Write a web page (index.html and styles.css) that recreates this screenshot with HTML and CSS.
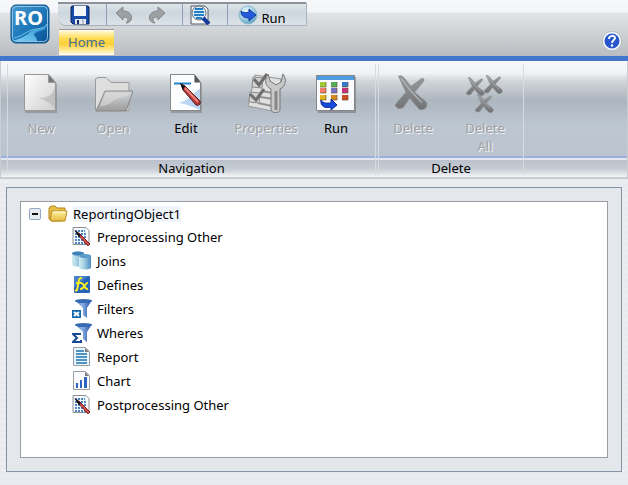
FILE: index.html
```html
<!DOCTYPE html>
<html lang="en">
<head>
<meta charset="utf-8">
<title>Reporting Object</title>
<link rel="stylesheet" href="styles.css">
</head>
<body>
<svg class="defs" aria-hidden="true">
  <defs>
    <linearGradient id="gPage" x1="0" y1="0" x2="1" y2="1"><stop offset="0" stop-color="#fff"/><stop offset="1" stop-color="#cfcfcf"/></linearGradient>
    <linearGradient id="gGrey" x1="0" y1="0" x2="0" y2="1"><stop offset="0" stop-color="#d4d6d8"/><stop offset="1" stop-color="#9c9c9c"/></linearGradient>
    <linearGradient id="gLogo" x1="0" y1="0" x2="1" y2="1"><stop offset="0" stop-color="#4a9bd0"/><stop offset=".55" stop-color="#1a76b8"/><stop offset="1" stop-color="#0a4f92"/></linearGradient>
    <linearGradient id="gRiver" x1="1" y1="0" x2="0" y2="1"><stop offset="0" stop-color="#2a8bc9"/><stop offset="1" stop-color="#7fd2f6"/></linearGradient>
    <linearGradient id="gX" x1="0" y1="0" x2="0" y2="1"><stop offset="0" stop-color="#989a9c"/><stop offset="1" stop-color="#707275"/></linearGradient>
    <linearGradient id="gFunnel" x1="0" y1="0" x2="1" y2="0"><stop offset="0" stop-color="#285ba8"/><stop offset=".4" stop-color="#8fb5e6"/><stop offset="1" stop-color="#1c479a"/></linearGradient>
    <linearGradient id="gDb" x1="0" y1="0" x2="1" y2="0"><stop offset="0" stop-color="#d4eef0"/><stop offset=".4" stop-color="#a8d3e6"/><stop offset="1" stop-color="#4c8cc0"/></linearGradient>
    <linearGradient id="gFold" x1="0" y1="0" x2="0" y2="1"><stop offset="0" stop-color="#fff3a6"/><stop offset="1" stop-color="#e5b83c"/></linearGradient>
    <radialGradient id="gBall" cx=".4" cy=".3" r=".7"><stop offset="0" stop-color="#eaf8fc"/><stop offset=".6" stop-color="#a3d3e5"/><stop offset="1" stop-color="#5d9fc0"/></radialGradient>
    <g id="cross"><path d="M3 1Q5 0 7 2L13 10 22 3Q25 3 23 6L16 15 26 24Q27 31 20 30L12 20 7 28Q2 31 0 26L9 15Z" fill="url(#gX)" stroke="#8d8f92" stroke-width=".8"/><path d="M5 3L13 14 22 24" fill="none" stroke="#b4b6b8" stroke-width="1"/></g>
    <g id="processing"><path d="M1 .5h13l3 3v14H1z" fill="#f7faff" stroke="#8e9092"/><path d="M3 4h10M3 7h12M3 10h12M3 13h12M3 16h11" stroke="#4a86c4" stroke-width="2" stroke-dasharray="2 1"/><path d="M4 4l4 3 10 10-2 2L6 8z" fill="#d24842" stroke="#6b1a20" stroke-width=".8"/><path d="M2 3l7 5-2 2z" fill="#111"/></g>
    <g id="funnel"><path d="M3 1h17l-5 8v10l-4-3V9z" fill="url(#gFunnel)"/><ellipse cx="11.500" cy="2" rx="8.500" ry="2" fill="#376ab3"/></g>
  </defs>
</svg>

<header class="header">
  <svg class="logo" viewBox="0 0 40 40" role="img" aria-label="RO">
    <rect x="1" y="1" width="38" height="38" rx="5" fill="url(#gLogo)" stroke="#0b5288"/>
    <path d="M37 21C34 26 24 24 20 28S11 34 3 37h24c0-5-5-5-2-8 5-3 12-2 12-8z" fill="url(#gRiver)"/>
    <path d="M37 20C34 26 24 24 19 27S9 33 4 34" fill="none" stroke="#75c6ed" stroke-width="1"/>
    <rect x="2.500" y="2.500" width="35" height="35" rx="4" fill="none" stroke="#8fc2e2"/>
    <text x="18.500" y="21" text-anchor="middle" class="logo-text">RO</text>
  </svg>
  <div class="header-main">
    <div class="quickbar" role="toolbar" aria-label="Quick access">
      <button class="quick quick-save" aria-label="Save"><svg width="20" height="20" viewBox="0 0 20 20"><path d="M2 1h16l1 1v17H3l-2-2V2z" fill="#174ba9" stroke="#0b2358"/><path d="M4 1h12v10H4z" fill="#f4f7fa"/><path d="M5 14h11v5H5z" fill="#e5e9ef"/><path d="M7 15h2v4H7z" fill="#102c70"/><path d="M12 15h1v4" stroke="#8e9cb8" fill="none"/></svg></button>
      <button class="quick quick-undo" aria-label="Undo"><svg width="18" height="18" viewBox="0 0 18 18"><path d="M1 7l7-6v4c7 0 10 5 8 9-1 2-3 3-5 3 3-3 3-6-3-6v3z" fill="#9ea1a4" stroke="#85898d"/></svg></button>
      <button class="quick quick-redo" aria-label="Redo"><svg width="18" height="18" viewBox="0 0 18 18"><path d="M17 7l-7-6v4C3 5 0 10 2 14c1 2 3 3 5 3-3-3-3-6 3-6v3z" fill="#9ea1a4" stroke="#85898d"/></svg></button>
      <button class="quick quick-view" aria-label="Preview"><svg width="22" height="20" viewBox="0 0 22 20"><path d="M2 1h14l3 3v15H2z" fill="#f6f8f9" stroke="#55595f"/><circle cx="10" cy="8" r="7" fill="#d7f0fb" stroke="#696f75"/><path d="M6 4h8M5 7h10M5 10h10M7 13h6" stroke="#247cc2" stroke-width="2"/><path d="M14 13l6 6" stroke="#153b9c" stroke-width="4"/></svg></button>
      <button class="quick quick-run"><svg width="20" height="20" viewBox="0 0 20 20"><circle cx="10" cy="10" r="9" fill="url(#gBall)" stroke="#8dbbcc"/><path d="M3 6c2 2 5 2 8 1V4l7 6-7 6v-3c-4 0-8-1-8-7z" fill="#245ce0" stroke="#143899"/></svg><span>Run</span></button>
    </div>
    <nav class="tabs"><a class="tab" href="#home">Home</a></nav>
  </div>
  <button class="help" aria-label="Help"><svg width="20" height="20" viewBox="0 0 20 20"><circle cx="10" cy="10" r="8.500" fill="#2855cc" stroke="#f6f8fb" stroke-width="2"/><circle cx="10" cy="10" r="9.500" fill="none" stroke="#a9b1bc" stroke-width=".7"/><path d="M7 8c0-4 6-4 6-1 0 2-3 2-3 5" fill="none" stroke="#fff" stroke-width="2"/><circle cx="10" cy="14.500" r="1.200" fill="#fff"/></svg></button>
</header>

<section class="ribbon" id="home">
  <div class="group">
    <div class="tools tools-nav">
      <button class="tool" disabled><svg width="40" height="40" viewBox="0 0 40 40"><path d="M4 2h24l8 9v29H4z" fill="#777" opacity=".5"/><path d="M3.500 1.500h24l7 8v28h-31z" fill="url(#gPage)" stroke="#999"/><path d="M34 13c-1 9-8 12-17 12 8 2 13 6 17 10z" fill="#b2b2b2" opacity=".6"/><path d="M27.500 1.500v8h7z" fill="#777" stroke="#999"/></svg><span>New</span></button>
      <button class="tool" disabled><svg width="40" height="40" viewBox="0 0 40 40"><path d="M2.500 37.500V6L5 4.500h8l5 5h18v28z" fill="#dedede" stroke="#999"/><path d="M3 38l9-20h28l-7 20z" fill="url(#gGrey)" stroke="#888"/><path d="M13 20h24c-3 5-12 4-17 8-3 3-9 5-13 5z" fill="#dedede" opacity=".6"/></svg><span>Open</span></button>
      <button class="tool"><svg width="40" height="40" viewBox="0 0 40 40"><path d="M5 3h25l6 8v29H5z" fill="#777" opacity=".5"/><path d="M4.500 1.500h24l6 8v28h-30z" fill="#fcfdff" stroke="#888"/><path d="M34 16c-4 0-6 9-21 14 7 1 14 4 21 7z" fill="#bdd5f5"/><path d="M28.500 1.500v8h6z" fill="#555"/><path d="M8 10.500h17" stroke="#2184c9" stroke-width="2"/><path d="M15 11l4 2 15 15c1 3-1 5-4 4L17 17z" fill="#b33636" stroke="#542020"/><path d="M19 15l13 14" stroke="#ef8178" stroke-width="2"/><path d="M14 10l5 3-2 4z" fill="#111"/></svg><span>Edit</span></button>
      <button class="tool" disabled><svg width="40" height="40" viewBox="0 0 40 40"><path d="M9 2l26 4-4 33-29-6z" fill="#e0e0e0" stroke="#999"/><path d="M15 18l12 2M14 24l14 2M12 30l14 3" stroke="#929292" stroke-width="2"/><path d="M7 4l10 1-1 10-10-1zM4 19l10 1-1 10-10-1z" fill="#d1d1d1" stroke="#8b8b8b"/><path d="M8 6l5 6 8-11M4 21l6 6 8-11" stroke="#6e6e6e" stroke-width="3" fill="none"/><path d="M22 1c-4 6-3 12 3 15v20c0 5 9 5 9 0V16c6-3 7-9 3-15l-2 8-5 3-6-4z" fill="#c7c8c9" stroke="#777"/><path d="M30 18v19" stroke="#888" stroke-width="3"/></svg><span>Properties</span></button>
      <button class="tool"><svg width="40" height="40" viewBox="0 0 40 40"><path d="M2 4h38v36H2z" fill="#777" opacity=".6"/><path d="M.5 2.500h38v35H.5z" fill="#fbfcff" stroke="#858585"/><path d="M1 3h37v4H1z" fill="#4d9be0"/><path d="M4 9h6v5H4z" fill="#a1cc36"/><path d="M15 9h6v5h-6z" fill="#55ad58"/><path d="M26 9h6v5h-6z" fill="#3478cb"/><path d="M4 15h6v5H4z" fill="#f17b6b"/><path d="M15 15h6v5h-6z" fill="#7772c7"/><path d="M26 15h6v5h-6z" fill="#c62e79"/><path d="M4 22h6v5H4z" fill="#e0b51f"/><path d="M15 22h6v5h-6z" fill="#d7861c"/><path d="M26 22h6v5h-6z" fill="#cc4b20"/><path d="M4 14h6V9M15 14h6V9M26 14h6V9M4 20h6v-5M15 20h6v-5M26 20h6v-5M4 27h6v-5M15 27h6v-5M26 27h6v-5" fill="none" stroke="#695832" opacity=".7"/><path d="M5 27c2 4 6 3 10 3v-4l6 6-6 5v-3C9 36 4 33 5 27z" fill="#174bdc" stroke="#102c9b"/></svg><span>Run</span></button>
    </div>
    <h2 class="group-name">Navigation</h2>
  </div>
  <div class="group">
    <div class="tools tools-delete">
      <button class="tool" disabled><svg width="40" height="40" viewBox="0 0 40 40"><g transform="translate(2 2) scale(1.220 1.150)"><use href="#cross"/></g></svg><span>Delete</span></button>
      <button class="tool" disabled><svg width="40" height="40" viewBox="0 0 40 40"><g transform="translate(1 4) scale(.7 .62)"><use href="#cross"/></g><g transform="translate(19 2) scale(.7 .62)"><use href="#cross"/></g><g transform="translate(10 21) scale(.7 .62)"><use href="#cross"/></g></svg><span>Delete<br>All</span></button>
    </div>
    <h2 class="group-name">Delete</h2>
  </div>
</section>

<main class="panel">
  <div class="tree">
    <div class="row root">
      <button class="toggle" aria-label="Collapse" aria-expanded="true"></button>
      <svg width="20" height="20" viewBox="0 0 20 20"><path d="M1 15V4l2-2h4l2 2h8v12l-3 1H3z" fill="#e5bd48" stroke="#b5851e"/><path d="M2 16L4 7h15l-2 10H3z" fill="url(#gFold)" stroke="#bd8c24"/><path d="M5 8h12" stroke="#fffbd7"/></svg>
      <span class="selected">ReportingObject1</span>
    </div>
    <ul class="children">
      <li class="row"><svg width="20" height="20" viewBox="0 0 20 20"><use href="#processing"/></svg><span>Preprocessing Other</span></li>
      <li class="row"><svg width="20" height="20" viewBox="0 0 20 20"><path d="M0 2c2-2 9-2 12 0v12c-3 2-10 2-12 0z" fill="url(#gDb)"/><ellipse cx="6" cy="2.500" rx="6" ry="2" fill="#3d80b7"/><path d="M7 5c2-2 9-2 12 0v12c-3 2-10 2-12 0z" fill="url(#gDb)"/><ellipse cx="13" cy="5" rx="6" ry="2" fill="#5c9cca"/></svg><span>Joins</span></li>
      <li class="row"><svg width="20" height="20" viewBox="0 0 20 20"><rect x="2" y="1" width="16" height="17" rx="1" fill="#2864b8"/><path d="M2 13V2l1-1h13z" fill="#5d95d5" opacity=".6"/><path d="M10 3C6 2 7 8 5 15l-2 1M4 8h6M9 8c3-1 3 7 7 6M16 8c-3-1-4 7-8 6" fill="none" stroke="#f7ed21" stroke-width="2"/></svg><span>Defines</span></li>
      <li class="row"><svg width="20" height="20" viewBox="0 0 20 20"><use href="#funnel"/><path d="M0 11h9v8H0z" fill="#176bac"/><path d="M2 13l5 4M7 13l-5 4" stroke="#fff" stroke-width="2"/></svg><span>Filters</span></li>
      <li class="row"><svg width="20" height="20" viewBox="0 0 20 20"><use href="#funnel"/><path d="M8 12V11H1l4 4-4 4h8v-2" fill="none" stroke="#174994" stroke-width="2"/></svg><span>Wheres</span></li>
      <li class="row"><svg width="20" height="20" viewBox="0 0 20 20"><path d="M1.500 .5h12l4 4v14h-16z" fill="#e8f5fc" stroke="#989da3"/><path d="M13 1v4h4z" fill="#777"/><path d="M4 4h8M4 7h11M4 10h11M4 13h11M4 16h11" stroke="#1d73ae" stroke-width="1.500"/></svg><span>Report</span></li>
      <li class="row"><svg width="20" height="20" viewBox="0 0 20 20"><path d="M1.500 .5h12l4 4v14h-16z" fill="#fbfcff" stroke="#989da3"/><path d="M13 1v4h4z" fill="#777"/><path d="M4 12h2v5H4zM8 9h2v8H8zM12 6h3v11h-3z" fill="#2e65c3"/></svg><span>Chart</span></li>
      <li class="row"><svg width="20" height="20" viewBox="0 0 20 20"><use href="#processing"/></svg><span>Postprocessing Other</span></li>
    </ul>
  </div>
</main>
</body>
</html>
```
FILE: styles.css
```css
* { box-sizing: border-box; }

body {
  margin: 0;
  min-height: 100vh;
  display: flex;
  flex-direction: column;
  font: 13px/16px "Noto Sans", "Liberation Sans", sans-serif;
  color: #000;
  background: repeating-linear-gradient(#ebedf1 0 3px, #e8eaef 3px 6px);
}

button {
  margin: 0;
  padding: 0;
  border: 0;
  background: none;
  font: inherit;
  color: inherit;
}

svg { display: block; flex: none; }
.defs { position: absolute; width: 0; height: 0; }

.header {
  display: flex;
  height: 61px;
  padding-left: 10px;
  border-bottom: 5px solid #4376cd;
  background: linear-gradient(#f7f8fa, #f4f5f8 12px, #e1e4e6 13px, #b9bdc1);
}
.logo { width: 40px; height: 40px; margin-top: 4px; }
.logo-text { font: bold 20px "Noto Sans", sans-serif; fill: #fff; }
.header-main { flex: 1; margin-left: 8px; padding-top: 2px; }

.quickbar {
  display: inline-flex;
  vertical-align: top;
  height: 24px;
  border: 1px solid #a9b1bb;
  border-top: 2px solid #8b929c;
  border-left: 0;
  border-radius: 0 2px 2px 8px;
  background: linear-gradient(#dde4ea, #cdd6de 9px, #dce3e8);
}
.quick { display: flex; align-items: center; justify-content: center; }
.quick-save { width: 48px; padding-right: 4px; }
.quick-undo { width: 34px; border-left: 1px solid #8f9eb7; }
.quick-redo { width: 42px; padding-right: 8px; }
.quick-view { width: 45px; border-left: 1px solid #8f9eb7; padding-right: 10px; }
.quick-run { width: 79px; border-left: 1px solid #8f9eb7; gap: 3px; padding-right: 10px; }
.quick-run span { padding-top: 6px; }

.tabs { display: flex; padding: 3px 1px 0; }
.tab {
  height: 26px;
  padding: 0 9px;
  line-height: 24px;
  color: #426c9b;
  text-decoration: none;
  border-top: 1px solid #999a95;
  background: linear-gradient(#fffdf3, #fff0ad 3px, #ffda4c 9px, #fbd03b 14px, #ffe894 20px, #fffdf1);
}
.help { align-self: flex-start; margin: 31px 6px 0 0; }

.ribbon {
  display: flex;
  height: 118px;
  padding: 3px 0 2px 7px;
  border: solid #c9ccd1;
  border-width: 0 1px 2px 1px;
  background:
    linear-gradient(#9bb0dd, #9bb0dd) 0 95px / 100% 2px no-repeat,
    linear-gradient(#e4e8ef, #e4e8ef) 0 97px / 100% 2px no-repeat,
    linear-gradient(#bac1cb, #c6ccd3 9px, #f4f5f7) 0 99px / 100% 17px no-repeat,
    linear-gradient(#f6f7fa, #f1f3f5 12px, #d2d6da 20px, #adb6bf 39px, #bdc7d1 65px, #bcc4ce 95px);
}
.group {
  display: flex;
  flex-direction: column;
  border-right: 1px solid #d6dae3;
}
.group:first-child { border-left: 1px solid #d6dae3; margin-left: -1px; }
.group + .group { border-left: 1px solid #d6dae3; margin-left: 2px; }
.tools { display: grid; flex: 1; }
.tools-nav { grid-template-columns: 66px 78px 68px 92px 48px; padding-right: 15px; }
.tools-delete { grid-template-columns: 68px 76px; }
.tool {
  display: flex;
  flex-direction: column;
  align-items: center;
  padding-top: 9px;
  gap: 6px;
  line-height: 18px;
}
.tool:disabled { color: #9fa1a4; text-shadow: 1px 1px #f2f4f6; }
.group-name {
  margin: 0;
  font: inherit;
  height: 15px;
  text-align: center;
}

.panel {
  flex: 1;
  display: flex;
  margin: 8px 6px 13px;
  padding: 13px;
  border: 1px solid #8393a4;
  background: #e4e8ec;
}
.tree {
  flex: 1;
  border: 1px solid #9a9da1;
  background: #fff;
}
.row { display: flex; align-items: center; height: 24px; gap: 5px; }
.root { height: 23px; padding-left: 8px; }
.toggle {
  width: 12px;
  height: 12px;
  margin-right: 2px;
  border: 1px solid #92a8c8;
  border-radius: 2px;
  background: linear-gradient(#111, #111) center / 6px 2px no-repeat, #e8ebef;
}
.selected { background: #f0f4fb; }
.children { margin: 0; padding: 0 0 0 51px; list-style: none; }
```
